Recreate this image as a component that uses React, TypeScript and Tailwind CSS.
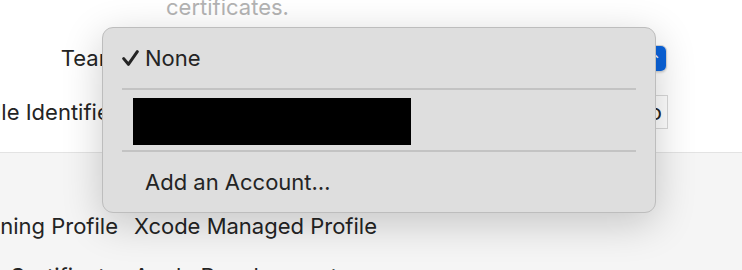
const rows = [
  { label: "Provisioning Profile", value: "Xcode Managed Profile" },
  { label: "Signing Certificate", value: "Apple Development" },
];

const Check = () => (
  <svg width="17" height="16" viewBox="0 0 17 16" className="shrink-0">
    <path
      d="M1.7 8.6 L6.4 14.3 L15.3 1.7"
      fill="none"
      stroke="#242424"
      strokeWidth="3"
      strokeLinecap="round"
      strokeLinejoin="round"
    />
  </svg>
);

const TeamMenu = () => {
  return (
    <div className="absolute left-[102px] top-[27px] w-[554px] rounded-[11px] bg-[#dedede] border border-[#bdbdbd] shadow-[0_10px_40px_rgba(0,0,0,0.2)] px-[19px] text-[#242424]">
      <div className="h-[60px] flex items-center gap-[6px]">
        <Check />
        <span>None</span>
      </div>
      <div className="h-[2px] bg-[#c3c3c3]" />
      <div className="h-[60px] pt-[8px] pl-[11px]">
        <div className="w-[278px] h-[47px] bg-black" />
      </div>
      <div className="h-[2px] bg-[#c3c3c3]" />
      <div className="h-[60px] flex items-center pl-[23px]">Add an Account…</div>
    </div>
  );
};

export default function App() {
  return (
    <div className="relative w-[742px] h-[270px] overflow-hidden bg-[#f5f5f5] font-['Inter',sans-serif] text-[22px] leading-[33px] text-[#242424]">
      <div className="bg-white border-b border-[#e3e3e3] h-[153px] flex flex-col">
        <div className="pl-[166px] h-[33px] -mt-[9px] text-[#b3b3b3]">certificates.</div>
        <div className="flex items-center gap-[16px] -ml-[182px] mt-[21px] h-[27px]">
          <div className="w-[300px] text-right shrink-0">Team</div>
          <div className="w-[533px] h-[27px] rounded-[6px] bg-white border border-[#d6d6d6] shadow-[0_1px_2px_rgba(0,0,0,0.12)] flex justify-end">
            <div className="w-[22px] h-full rounded-[5px] bg-[#0a63db] flex items-center justify-center text-white text-[11px] leading-none font-bold">
              ⌃
            </div>
          </div>
        </div>
        <div className="flex items-center gap-[16px] -ml-[182px] mt-[23px] h-[34px]">
          <div className="w-[300px] text-right shrink-0">Bundle Identifier</div>
          <div className="w-[534px] h-[34px] bg-white border border-[#d9d9d9] flex items-center justify-end pr-[5px]">
            com.example.demo
          </div>
        </div>
      </div>
      <div className="flex flex-col gap-[17px] -ml-[182px] mt-[57px]">
        {rows.map((r) => (
          <div key={r.label} className="flex gap-[16px]">
            <div className="w-[300px] text-right shrink-0">{r.label}</div>
            <div>{r.value}</div>
          </div>
        ))}
      </div>
      <TeamMenu />
    </div>
  );
}
